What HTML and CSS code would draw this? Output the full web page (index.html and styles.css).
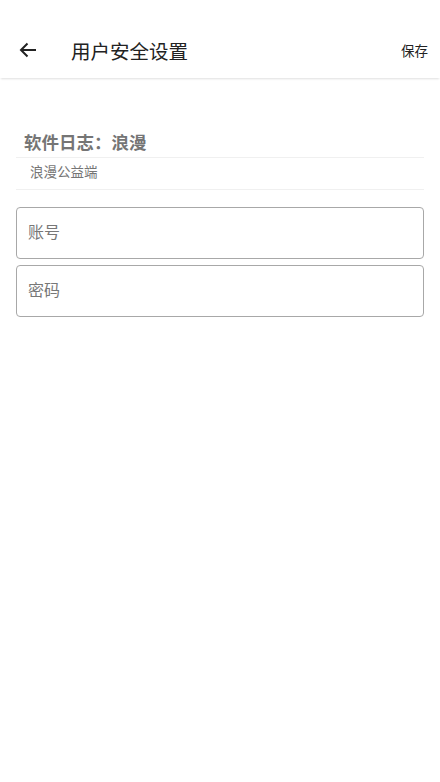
FILE: index.html
```html
<!DOCTYPE html>
<html lang="zh">
<head>
<meta charset="utf-8">
<link rel="stylesheet" href="styles.css">
</head>
<body>
<div class="page">
  <header class="appbar">
    <div class="back">
      <svg width="18" height="16" viewBox="0 0 18 16"><path d="M17 8H2M8.5 1.5L2 8l6.5 6.5" fill="none" stroke="#222" stroke-width="2"/></svg>
    </div>
    <div class="title">用户安全设置</div>
    <div class="save">保存</div>
  </header>
  <main class="content">
    <div class="log-title">软件日志：浪漫</div>
    <div class="log-body">浪漫公益端</div>
    <div class="field"><span class="ph">账号</span></div>
    <div class="field"><span class="ph">密码</span></div>
  </main>
</div>
</body>
</html>
```
FILE: styles.css
```css
html, body {
  margin: 0;
  padding: 0;
  background: #fff;
}
* {
  box-sizing: border-box;
}
body {
  font-family: "Noto Sans CJK SC", "Noto Sans", sans-serif;
  width: 440px;
  height: 782px;
}
.appbar {
  margin-top: 24px;
  height: 54px;
  padding-bottom: 2px;
  display: flex;
  align-items: center;
  box-shadow: 0 2px 2px -1px rgba(0,0,0,0.13);
  position: relative;
}
.back {
  width: 18px;
  margin-left: 19px;
  display: flex;
  align-items: center;
}
.title {
  margin-left: 34px;
  font-size: 19.5px;
  color: #222;
  flex: 1;
}
.save {
  font-size: 13.5px;
  color: #222;
  margin-right: 12px;
}
.content {
  padding: 51px 16px 0;
}
.log-title {
  font-size: 17.5px;
  font-weight: bold;
  color: #757575;
  padding-left: 8px;
  line-height: 26px;
  padding-bottom: 2px;
  border-bottom: 1px solid #f0f0f0;
}
.log-body {
  font-size: 13.5px;
  color: #757575;
  padding-left: 14px;
  line-height: 20px;
  padding-top: 3px;
  padding-bottom: 8px;
  border-bottom: 1px solid #f0f0f0;
}
.field {
  margin-top: 17px;
  height: 52px;
  border: 1px solid #a8a8a8;
  border-radius: 4px;
  display: flex;
  align-items: center;
  padding-left: 11px;
  padding-bottom: 4px;
}
.field + .field {
  margin-top: 6px;
}
.ph {
  font-size: 16px;
  color: #777;
}
```
